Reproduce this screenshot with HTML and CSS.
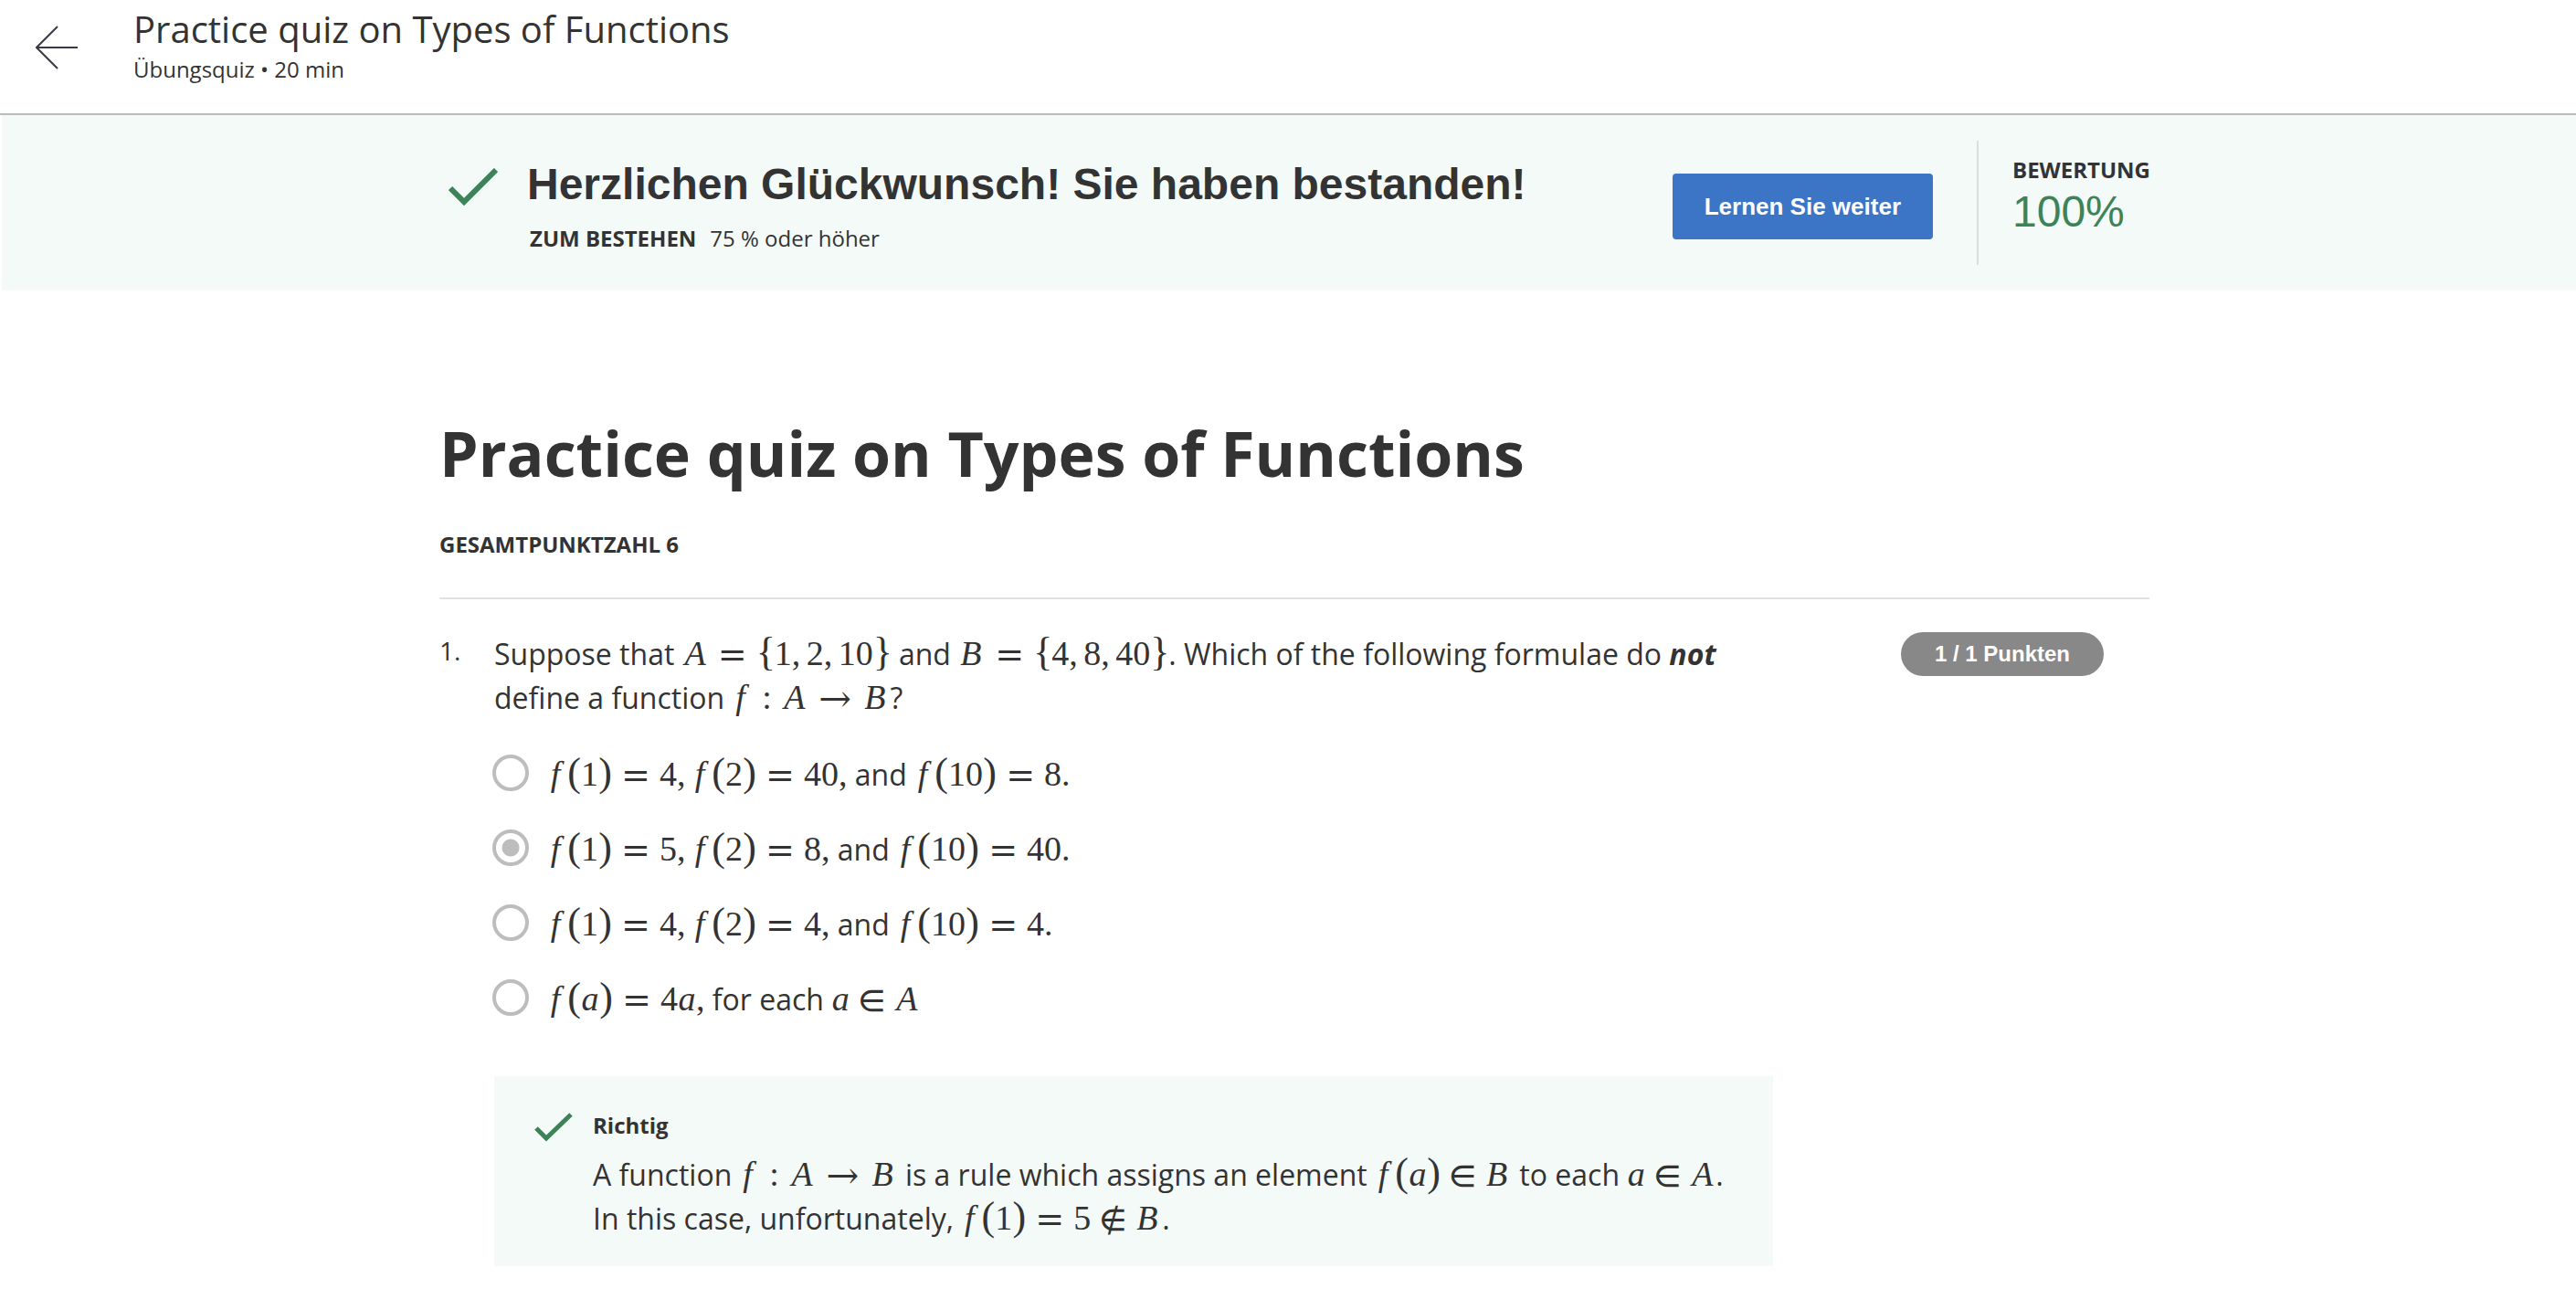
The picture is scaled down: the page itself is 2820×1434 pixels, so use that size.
FILE: index.html
```html
<!DOCTYPE html>
<html lang="de">
<head>
<meta charset="utf-8">
<meta name="viewport" content="width=device-width, initial-scale=1">
<title>Practice quiz on Types of Functions</title>
<link rel="stylesheet" href="styles.css">
</head>
<body>
<header class="topbar">
  <button class="back" type="button" aria-label="Zurück">
    <svg width="48" height="48" viewBox="0 0 48 48" fill="none" stroke="#373a46" stroke-width="2" aria-hidden="true"><path d="M46 24H1M24 1L1 24L24 47"/></svg>
  </button>
  <div class="topbar-text">
    <p class="topbar-title">Practice quiz on Types of Functions</p>
    <p class="small">Übungsquiz • 20 min</p>
  </div>
</header>

<section class="banner">
  <div class="container banner-inner">
    <svg class="banner-check" width="54" height="42" viewBox="0 0 54 42" fill="none" stroke="#3d8358" stroke-width="6" aria-hidden="true"><path d="M2 22L17 37L52 2"/></svg>
    <div class="banner-text">
      <h2 class="banner-title">Herzlichen Glückwunsch! Sie haben bestanden!</h2>
      <p class="small pass"><strong>ZUM BESTEHEN</strong><span>75 % oder höher</span></p>
    </div>
    <button class="primary" type="button">Lernen Sie weiter</button>
    <div class="score">
      <p class="small"><strong>BEWERTUNG</strong></p>
      <p class="score-value">100%</p>
    </div>
  </div>
</section>

<main class="container">
  <h1 class="title">Practice quiz on Types of Functions</h1>
  <p class="small total"><strong>GESAMTPUNKTZAHL 6</strong></p>

  <section class="question">
    <span class="number">1.</span>
    <div class="body">
      <p class="text" id="q1">Suppose that <span class="math"><i class="A">A</i><b class="rel">=</b><b class="brace">{</b>1<b class="comma">,</b>2<b class="comma">,</b>10<b class="brace">}</b></span> and <span class="math"><i class="B">B</i><b class="rel">=</b><b class="brace">{</b>4<b class="comma">,</b>8<b class="comma">,</b>40<b class="brace">}</b></span>. Which of the following formulae do <strong><em>not</em></strong> define a function <span class="math"><i class="f">f</i><b class="colon">:</b><i class="A">A</i><b class="arrow">→</b><i class="B">B</i></span>?</p>

      <div class="options" role="radiogroup" aria-labelledby="q1">
        <label class="option"><input type="radio" name="q1"><span class="text"><span class="math"><i class="f">f</i><b class="paren">(</b>1<b class="paren">)</b><b class="rel">=</b>4<b class="comma">,</b><i class="f">f</i><b class="paren">(</b>2<b class="paren">)</b><b class="rel">=</b>40,</span> and <span class="math"><i class="f">f</i><b class="paren">(</b>10<b class="paren">)</b><b class="rel">=</b>8.</span></span></label>
        <label class="option"><input type="radio" name="q1" checked><span class="text"><span class="math"><i class="f">f</i><b class="paren">(</b>1<b class="paren">)</b><b class="rel">=</b>5<b class="comma">,</b><i class="f">f</i><b class="paren">(</b>2<b class="paren">)</b><b class="rel">=</b>8,</span> and <span class="math"><i class="f">f</i><b class="paren">(</b>10<b class="paren">)</b><b class="rel">=</b>40.</span></span></label>
        <label class="option"><input type="radio" name="q1"><span class="text"><span class="math"><i class="f">f</i><b class="paren">(</b>1<b class="paren">)</b><b class="rel">=</b>4<b class="comma">,</b><i class="f">f</i><b class="paren">(</b>2<b class="paren">)</b><b class="rel">=</b>4,</span> and <span class="math"><i class="f">f</i><b class="paren">(</b>10<b class="paren">)</b><b class="rel">=</b>4.</span></span></label>
        <label class="option"><input type="radio" name="q1"><span class="text"><span class="math"><i class="f">f</i><b class="paren">(</b><i class="a">a</i><b class="paren">)</b><b class="rel">=</b>4<i class="a">a</i>,</span> for each <span class="math"><i class="a">a</i><b class="in">∈</b><i class="A">A</i></span></span></label>
      </div>

      <div class="feedback">
        <svg class="feedback-check" width="42" height="32" viewBox="0 0 42 32" fill="none" stroke="#3d8358" stroke-width="5" aria-hidden="true"><path d="M2 17L13 28L40 2"/></svg>
        <div>
          <p class="small verdict"><strong>Richtig</strong></p>
          <p class="text">A function <span class="math"><i class="f">f</i><b class="colon">:</b><i class="A">A</i><b class="arrow">→</b><i class="B">B</i></span> is a rule which assigns an element <span class="math"><i class="f">f</i><b class="paren">(</b><i class="a">a</i><b class="paren">)</b><b class="in">∈</b><i class="B">B</i></span> to each <span class="math"><i class="a">a</i><b class="in">∈</b><i class="A">A</i></span>.<br>In this case, unfortunately, <span class="math"><i class="f">f</i><b class="paren">(</b>1<b class="paren">)</b><b class="rel">=</b>5<b class="in">∉</b><i class="B">B</i></span>.</p>
        </div>
      </div>
    </div>
    <span class="badge">1 / 1 Punkten</span>
  </section>
</main>
</body>
</html>
```

FILE: styles.css
```css
* { box-sizing: border-box; }

body {
  margin: 0;
  background: #fff;
  color: #333;
  font-family: "Open Sans", "Noto Sans", sans-serif;
}

h1, h2, p { margin: 0; }

button {
  border: 0;
  padding: 0;
  background: none;
  cursor: pointer;
}

svg { display: block; flex: none; }

.small { font-size: 24px; line-height: 32px; }

.container {
  width: calc(100% - 96px);
  max-width: 1886px;
  margin: 0 auto;
  padding-left: 14px;
}

/* Top bar */
.topbar {
  display: flex;
  align-items: flex-start;
  gap: 59px;
  height: 126px;
  padding: 4px 39px;
  border-bottom: 2px solid #bbb;
}

.back { margin-top: 24px; }

.topbar-title { font-size: 40px; line-height: 56px; }

/* Result banner */
.banner {
  margin-left: 2px;
  background: #f3faf8;
}

.banner-inner {
  display: flex;
  align-items: flex-start;
  padding-top: 28px;
  padding-bottom: 28px;
}

.banner-check { margin: 30px 32px 0 9px; }

.banner-text { margin-top: 20px; }

.banner-title {
  font: bold 48px/56px "Liberation Sans", Arial, sans-serif;
}

.pass {
  display: flex;
  gap: 15px;
  margin-top: 15px;
  padding-left: 3px;
}

.primary {
  margin: 36px 48px 0 auto;
  padding: 0 35px;
  border-radius: 4px;
  background: #3c74c6;
  color: #fff;
  font: bold 26px/72px "Liberation Sans", Arial, sans-serif;
}

.score {
  padding: 16px 0 28px 37px;
  border-left: 2px solid #ddd;
}

.score-value {
  color: #3d8358;
  font: 48px/60px "Liberation Sans", Arial, sans-serif;
}

/* Quiz */
.title {
  margin-top: 132px;
  font-size: 68px;
  line-height: 92px;
}

.total { margin-top: 38px; }

.question {
  display: flex;
  align-items: flex-start;
  margin-top: 42px;
  padding: 36px 50px 40px 0;
  border-top: 2px solid #e1e1e1;
}

.number {
  flex: none;
  width: 60px;
  font-size: 28px;
  line-height: 40px;
}

.body { flex: 0 1 1400px; }

.text { font-size: 32px; line-height: 48px; }

.badge {
  flex: none;
  margin-left: auto;
  padding: 0 37px;
  border-radius: 24px;
  background: #888;
  color: #fff;
  font: bold 24px/48px "Liberation Sans", Arial, sans-serif;
}

.options {
  display: grid;
  gap: 34px;
  margin-top: 36px;
}

.option {
  display: flex;
  align-items: flex-start;
  gap: 20px;
  margin-left: -2px;
}

.option input {
  flex: none;
  appearance: none;
  width: 40px;
  height: 40px;
  margin: 2px 0 0;
  border: 4px solid #bdbdbd;
  border-radius: 50%;
  background: #fff;
}

.option input:checked {
  background: radial-gradient(circle, #bdbdbd 9px, #fff 10px);
}

.feedback {
  display: flex;
  align-items: flex-start;
  gap: 22px;
  margin-top: 60px;
  padding: 38px 44px 28px;
  background: #f3faf8;
}

.feedback-check { margin-top: 2px; }

.verdict { margin-bottom: 14px; }

/* Formulas: each symbol sits in a cell of its own width */
.math {
  font-family: "Liberation Serif", "Times New Roman", serif;
  font-size: 38px;
  line-height: 0;
  white-space: nowrap;
}

.math i,
.math b {
  display: inline-block;
  font-weight: normal;
  text-align: center;
}

.A { width: 29px; }
.B { width: 30px; padding-right: 3px; }
.f { width: 22px; padding-right: 4px; }
.a { width: 20px; }
.paren, .brace { font-size: 44px; }
.paren { width: 15px; }
.brace { width: 20px; }
.comma { width: 16px; }
.math .comma { text-align: left; }
.colon { width: 32px; }

.rel, .in, .arrow {
  font-family: "DejaVu Math TeX Gyre", "DejaVu Serif", serif;
}

.rel { width: 52px; }
.in { width: 48px; }
.arrow { width: 60px; }
```
